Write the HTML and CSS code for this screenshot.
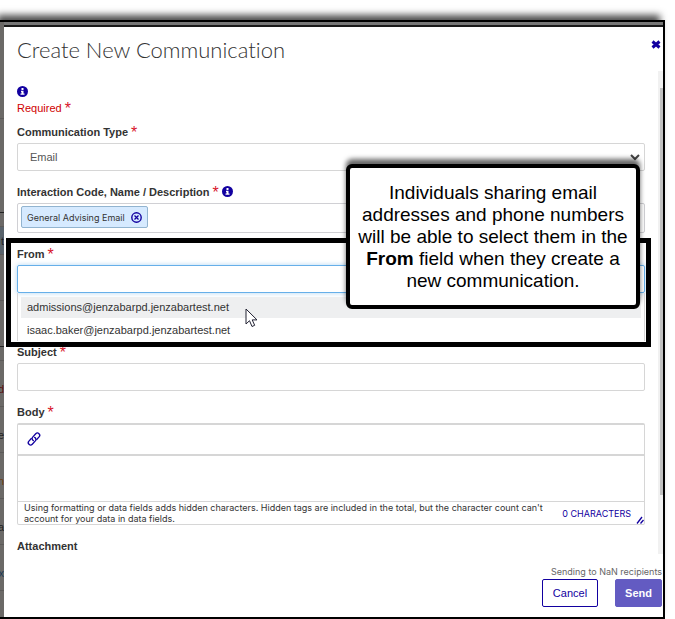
FILE: index.html
```html
<!DOCTYPE html>
<html lang="en">
<head>
  <meta charset="UTF-8">
  <meta name="viewport" content="width=device-width, initial-scale=1.0">
  <title>Create New Communication</title>
  <link rel="stylesheet" href="styles.css">
</head>
<body>

  <div class="window">
    <div class="backdrop" aria-hidden="true">
      <div class="row tall"></div>
      <div class="row taller dark"></div>
      <div class="row small"></div>
      <div class="row small blue">t</div>
      <div class="row"></div>
      <div class="row dark"></div>
      <div class="row small"></div>
      <div class="row red">d</div>
      <div class="row">e</div>
      <div class="row orange">n</div>
      <div class="row">a</div>
      <div class="row link">x</div>
    </div>

    <div class="dialog">
      <header class="dialog-header">
        <h1>Create New Communication</h1>
        <button type="button" class="close" aria-label="Close">
          <svg width="10" height="10" viewBox="0 0 10 10"><path d="M1.5 1.500 8.500 7.500M8.500 1.500 1.500 7.500" stroke="#1200a0" stroke-width="3"/></svg>
        </button>
      </header>

      <div class="scroll">
        <form class="form" id="communication">
          <svg class="info" width="11" height="11" viewBox="0 0 11 11"><circle cx="5.5" cy="5.5" r="5.5" fill="#1200a0"/><path d="M4.500 2h2v2h-2zM4 4.800h2.500V7.500H7.500V8.700H3.500V7.500H4.500V6H4z" fill="#fff"/></svg>
          <p class="required">Required <span class="star">*</span></p>

          <div class="field">
            <label for="type">Communication Type <span class="star">*</span></label>
            <div class="select-wrap">
              <select id="type"><option>Email</option></select>
              <svg class="chevron" width="10" height="7" viewBox="0 0 10 7"><path d="M1 1l4 4 4-4" fill="none" stroke="#444" stroke-width="2"/></svg>
            </div>
          </div>

          <div class="field">
            <label for="code">Interaction Code, Name / Description <span class="star">*</span>
              <svg class="info" width="11" height="11" viewBox="0 0 11 11"><circle cx="5.5" cy="5.5" r="5.5" fill="#1200a0"/><path d="M4.500 2h2v2h-2zM4 4.800h2.500V7.500H7.500V8.700H3.500V7.500H4.500V6H4z" fill="#fff"/></svg>
            </label>
            <div class="tags">
              <span class="tag">General Advising Email
                <button type="button" aria-label="Remove General Advising Email">
                  <svg width="11" height="11" viewBox="0 0 11 11"><circle cx="5.5" cy="5.5" r="4.7" fill="none" stroke="#1200a0" stroke-width="1.4"/><path d="M3.5 3.5l4 4M7.5 3.5l-4 4" stroke="#1200a0" stroke-width="1.3"/></svg>
                </button>
              </span>
              <input type="text" id="code">
            </div>
          </div>

          <div class="field from">
            <label for="from">From <span class="star">*</span></label>
            <input type="text" id="from" class="text focused">
            <ul class="options">
              <li class="active">admissions@jenzabarpd.jenzabartest.net
                <svg class="cursor" width="13" height="20" viewBox="0 0 13 20"><path d="M1 1v15l3.5-3.3L7 18.5l2.7-1.2-2.5-5.4H12z" fill="#fff" stroke="#223" stroke-width="1"/></svg>
              </li>
              <li>isaac.baker@jenzabarpd.jenzabartest.net</li>
            </ul>
          </div>

          <div class="field">
            <label for="subject">Subject <span class="star">*</span></label>
            <input type="text" id="subject" class="text">
          </div>

          <div class="field">
            <label for="body">Body <span class="star">*</span></label>
            <div class="editor">
              <div class="toolbar">
                <button type="button" aria-label="Insert link">
                  <svg width="16" height="16" viewBox="0 0 16 16"><g transform="rotate(-47 8 8)" fill="none" stroke="#1200a0" stroke-width="1.3" stroke-linecap="round"><path d="M9.500 10.300H13a2.300 2.300 0 0 0 0-4.600H8.500a2.300 2.300 0 0 0-2.100 2.900"/><path d="M6.500 5.700H3a2.300 2.300 0 0 0 0 4.600h4.500a2.300 2.300 0 0 0 2.100-2.900"/></g></svg>
                </button>
              </div>
              <textarea id="body"></textarea>
              <div class="counter">
                <p>Using formatting or data fields adds hidden characters. Hidden tags are included in the total, but the character count can't account for your data in data fields.</p>
                <span>0 CHARACTERS</span>
                <svg class="grip" width="8" height="8" viewBox="0 0 8 8"><path d="M1 7.500l5-6.500M4.500 7.500l3-3.500" stroke="#1200a0" stroke-width="1.300"/></svg>
              </div>
            </div>
          </div>

          <div class="field">
            <h2>Attachment</h2>
          </div>
        </form>
        <div class="track"><div class="thumb"></div></div>
      </div>

      <footer class="dialog-footer">
        <p>Sending to NaN recipients</p>
        <div class="actions">
          <button type="button" class="btn">Cancel</button>
          <button type="submit" form="communication" class="btn primary">Send</button>
        </div>
      </footer>

      <div class="callout">Individuals sharing email addresses and phone numbers will be able to select them in the <b>From</b> field when they create a new communication.</div>
    </div>
  </div>

</body>
</html>
```
FILE: styles.css
```css
* {
  box-sizing: border-box;
}

body {
  margin: 0;
  padding: 20px 10px 0 0;
  height: 100vh;
  display: flex;
  font-family: "Liberation Sans", Arial, sans-serif;
  font-size: 11px;
  color: #333;
  background: #fff;
  overflow: hidden;
}

h1, h2, p, ul {
  margin: 0;
  padding: 0;
}

button {
  padding: 0;
  border: 0;
  background: none;
  font-family: inherit;
  cursor: pointer;
}

svg {
  display: block;
}

.window {
  flex: 1;
  display: flex;
  min-width: 0;
  border: 2px solid #000;
  border-left: 0;
  background: #777;
  box-shadow: -4px -6px 7px -1px rgba(0, 0, 0, 0.7);
}

/* page behind the dialog */
.backdrop {
  width: 4px;
  flex-shrink: 0;
  overflow: hidden;
  background: #6b6967;
  color: #222;
}

.row {
  height: 46px;
  padding-top: 22px;
  border-bottom: 1px solid #5c5a59;
  direction: rtl;
}

.row.tall {
  height: 97px;
}

.row.taller {
  height: 94px;
}

.row.small {
  height: 14px;
  padding-top: 0;
}

.row.dark {
  border-bottom-color: #222;
}

.row.blue {
  height: 28px;
  padding-top: 8px;
  background: #59636c;
}

.row.red {
  color: #5a1212;
}

.row.orange {
  color: #6b3d10;
}

.row.link {
  color: #1d3a55;
}

.dialog {
  position: relative;
  flex: 1;
  min-width: 0;
  display: flex;
  flex-direction: column;
  margin-top: 3px;
  border-top: 2px solid #1a1a1a;
  background: #fff;
}

.dialog-header {
  display: flex;
  justify-content: space-between;
  height: 44px;
  padding: 8px 2px 0 13px;
}

.dialog-header h1 {
  font-family: Lato, sans-serif;
  font-size: 22px;
  line-height: 30px;
  font-weight: 300;
  font-variant-ligatures: none;
}

.close {
  height: 20px;
}

.scroll {
  flex: 1;
  min-height: 0;
  display: flex;
  overflow: hidden;
}

.form {
  flex: 1;
  min-width: 0;
  padding: 15px 13px 0;
}

.track {
  width: 5px;
  padding: 17px 0 59px 2px;
  background: #f1f1f1;
}

.thumb {
  height: 100%;
  background: #c1c1c1;
}

.required {
  margin: 2px 0 6px;
  line-height: 18px;
  color: #d00000;
}

.star {
  font-size: 16px;
  line-height: 1px;
  font-weight: normal;
  vertical-align: -2px;
  color: #d8152b;
}

.field {
  margin-bottom: 12px;
}

.field label,
.field h2 {
  display: block;
  margin-bottom: 2px;
  font-size: 11px;
  line-height: 18px;
  font-weight: bold;
}

label .info {
  display: inline-block;
  vertical-align: -1px;
}

.text,
select {
  display: block;
  width: 100%;
  height: 28px;
  padding: 0 12px;
  border: 1px solid #d6d6d6;
  border-radius: 2px;
  background: #fff;
  font-family: inherit;
  font-size: 11px;
  color: #555;
  outline: none;
}

.select-wrap {
  position: relative;
}

select {
  appearance: none;
}

.chevron {
  position: absolute;
  top: 11px;
  right: 5px;
}

.tags {
  display: flex;
  height: 30px;
  padding: 2px 3px;
  border: 1px solid #d0d0d4;
  border-radius: 2px;
}

.tags input {
  flex: 1;
  min-width: 0;
  border: 0;
  outline: none;
}

.tag {
  display: flex;
  align-items: center;
  gap: 6px;
  height: 22px;
  padding: 0 5px;
  border: 1px solid #92b4d0;
  border-radius: 2px;
  background: #d6eaff;
  font-family: Inter, sans-serif;
  font-size: 9px;
}

.from {
  position: relative;
  margin-bottom: 2px;
}

/* heavy outline round the whole field */
.from::after {
  content: "";
  position: absolute;
  inset: -7px -6px -6px -11px;
  border: 5px solid #000;
  pointer-events: none;
}

.text.focused {
  border-color: #66afe9;
  box-shadow: 0 0 5px rgba(102, 175, 233, 0.5);
}

.options {
  display: flex;
  flex-direction: column;
  gap: 2px;
  padding: 4px 3px 0;
  border: solid #d6d6d6;
  border-width: 0 1px;
  list-style: none;
}

.options li {
  position: relative;
  padding: 0 6px;
  line-height: 21px;
}

.options .active {
  background: #eeeff0;
}

.cursor {
  position: absolute;
  top: 11px;
  left: 224px;
  z-index: 1;
}

.editor {
  border: 1px solid #d6d6d6;
  border-top-width: 2px;
  border-radius: 2px;
}

.toolbar {
  padding: 6px 8px 7px;
  border-bottom: 2px solid #d6d6d6;
}

.toolbar button {
  display: block;
}

textarea {
  display: block;
  width: 100%;
  height: 45px;
  border: 0;
  outline: none;
  resize: none;
}

.counter {
  position: relative;
  display: flex;
  align-items: center;
  gap: 16px;
  padding: 0 13px 0 6px;
  border-top: 1px solid #d6d6d6;
  font-family: Inter, sans-serif;
  font-size: 9px;
  line-height: 11px;
}

.counter p {
  flex: 1;
}

.counter span {
  color: #1200a0;
}

.grip {
  position: absolute;
  right: 0;
  bottom: 0;
}

.dialog-footer {
  padding: 12px 1px 10px;
  text-align: right;
}

.dialog-footer p {
  font-family: Inter, sans-serif;
  font-size: 9px;
  line-height: 12px;
  color: #666;
}

.actions {
  display: flex;
  justify-content: flex-end;
  gap: 17px;
  margin-top: 1px;
}

.btn {
  height: 28px;
  padding: 0 10px;
  border: 1px solid #1200a0;
  border-radius: 2px;
  background: #fff;
  font-size: 11px;
  color: #1200a0;
}

.btn.primary {
  padding: 0 9px;
  border-color: #635bc2;
  background: #635bc2;
  font-weight: bold;
  color: #fff;
}

.callout {
  position: absolute;
  top: 137px;
  right: 23px;
  z-index: 2;
  width: 294px;
  padding: 14px 6px 13px;
  border: 4px solid #000;
  border-radius: 6px;
  background: #fff;
  box-shadow: 0 -5px 5px rgba(0, 0, 0, 0.6);
  font-size: 19px;
  line-height: 22px;
  text-align: center;
  color: #000;
}
```
